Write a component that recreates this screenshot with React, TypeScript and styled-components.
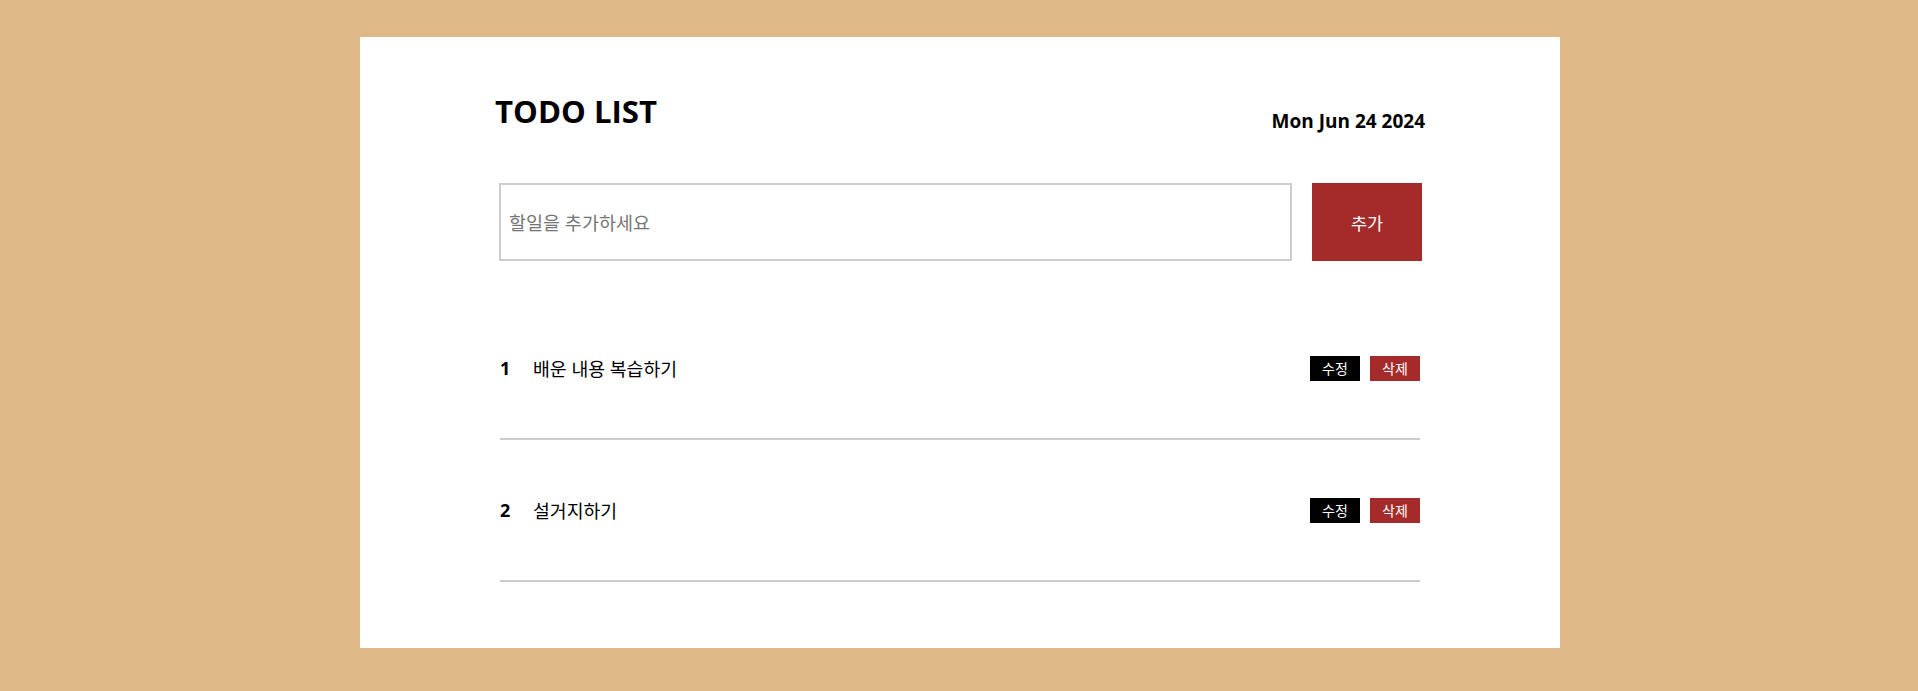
import React, { useState } from "react";
import styled, { createGlobalStyle } from "styled-components";

const GlobalStyle = createGlobalStyle`
    html, body {
        margin: 0;
        padding: 0;
        background: #deb887;
    }
    body {
        font-family: "Open Sans", "Noto Sans CJK KR", sans-serif;
        color: #000;
    }
`;

const Card = styled.div`
    width: 1200px;
    margin: 37px 0 0 calc(50% - 599px);
    box-sizing: border-box;
    background: #fff;
    padding: 53px 135px 66px;
`;

const Header = styled.header`
    display: flex;
    justify-content: space-between;
    align-items: flex-end;
`;

const Title = styled.h1`
    margin: 0;
    font-size: 31.2px;
    font-weight: 700;
`;

const DateText = styled.div`
    font-size: 19px;
    line-height: 22px;
    font-weight: 700;
`;

const Form = styled.form`
    display: flex;
    gap: 20px;
    margin-top: 51px;
    padding: 0 3px 0 4px;
`;

const Input = styled.input`
    flex: 1;
    height: 78px;
    box-sizing: border-box;
    border: 2px solid #cccccc;
    padding: 0 8px;
    font-family: inherit;
    font-size: 18.5px;
    outline: none;

    &::placeholder {
        color: #757575;
    }
`;

const AddButton = styled.button`
    width: 110px;
    height: 78px;
    border: none;
    background: #a52a2a;
    color: #fff;
    font-family: inherit;
    font-size: 17.5px;
    cursor: pointer;
`;

const List = styled.ul`
    list-style: none;
    margin: 37px 0 0;
    padding: 0 5px;
`;

const Item = styled.li`
    display: flex;
    align-items: center;
    height: 140px;
    border-bottom: 2px solid #cccccc;
`;

const Num = styled.span`
    width: 33px;
    font-size: 18px;
    font-weight: 700;
`;

const Content = styled.span`
    flex: 1;
    font-size: 18.3px;
`;

const Actions = styled.div`
    display: flex;
    gap: 10px;
`;

const SmallButton = styled.button<{ $danger?: boolean }>`
    width: 50px;
    height: 25px;
    padding: 0;
    border: none;
    background: ${({ $danger }) => ($danger ? "#a52a2a" : "#000")};
    color: #fff;
    font-family: inherit;
    font-size: 14px;
    cursor: pointer;
`;

const App: React.FC = () => {
    const [todos] = useState([
        { id: 1, text: "배운 내용 복습하기" },
        { id: 2, text: "설거지하기" },
    ]);

    return (
        <>
            <GlobalStyle />
            <Card>
                <Header>
                    <Title>TODO LIST</Title>
                    <DateText>Mon Jun 24 2024</DateText>
                </Header>
                <Form onSubmit={(e) => e.preventDefault()}>
                    <Input placeholder="할일을 추가하세요" />
                    <AddButton type="submit">추가</AddButton>
                </Form>
                <List>
                    {todos.map((todo) => (
                        <Item key={todo.id}>
                            <Num>{todo.id}</Num>
                            <Content>{todo.text}</Content>
                            <Actions>
                                <SmallButton>수정</SmallButton>
                                <SmallButton $danger>삭제</SmallButton>
                            </Actions>
                        </Item>
                    ))}
                </List>
            </Card>
        </>
    );
};

export default App;
